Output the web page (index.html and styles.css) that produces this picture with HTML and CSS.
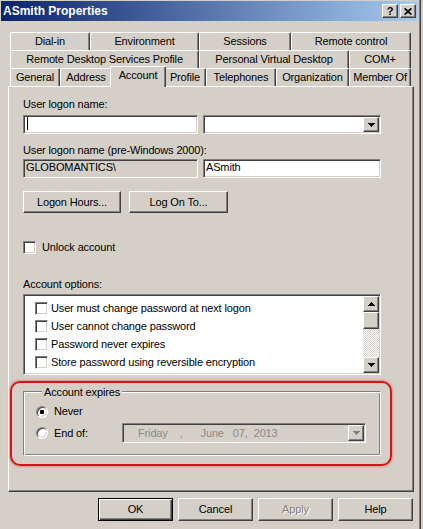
FILE: index.html
```html
<!DOCTYPE html>
<html lang="en">
<head>
  <meta charset="UTF-8" />
  <title>ASmith Properties</title>
  <link rel="stylesheet" href="styles.css">
</head>
<body>
  <div class="window">
    <div class="titlebar">
      <span class="title">ASmith Properties</span>
      <div class="caption-btns">
        <span class="cap-btn help">?</span>
        <span class="cap-btn">
          <svg width="8" height="7" viewBox="0 0 8 7"><path d="M0.6 0.4l6.8 6.2M7.4 0.4L0.6 6.6" stroke="#000" stroke-width="1.7"/></svg>
        </span>
      </div>
    </div>

    <div class="tabs">
      <div class="tab-row row1">
        <div class="tab">Dial-in</div>
        <div class="tab">Environment</div>
        <div class="tab">Sessions</div>
        <div class="tab">Remote control</div>
      </div>
      <div class="tab-row row2">
        <div class="tab">Remote Desktop Services Profile</div>
        <div class="tab">Personal Virtual Desktop</div>
        <div class="tab">COM+</div>
      </div>
      <div class="tab-row row3">
        <div class="tab">General</div>
        <div class="tab">Address</div>
        <div class="tab active">Account</div>
        <div class="tab">Profile</div>
        <div class="tab">Telephones</div>
        <div class="tab">Organization</div>
        <div class="tab">Member Of</div>
      </div>
    </div>

    <div class="panel">
      <div class="label first">User logon name:</div>
      <div class="field-row">
        <div class="edit"><span class="caret"></span></div>
        <div class="edit combo">
          <span class="drop-btn">
            <svg width="7" height="4" viewBox="0 0 7 4" shape-rendering="crispEdges"><path d="M0 0h7v1H6v1H5v1H4v1H3V3H2V2H1V1H0z"/></svg>
          </span>
        </div>
      </div>

      <div class="label second">User logon name (pre-Windows 2000):</div>
      <div class="field-row tight">
        <div class="edit readonly">GLOBOMANTICS\</div>
        <div class="edit">ASmith</div>
      </div>

      <div class="btn-row">
        <div class="btn logon-hours">Logon Hours...</div>
        <div class="btn log-on-to">Log On To...</div>
      </div>

      <div class="check unlock"><span class="box"></span>Unlock account</div>

      <div class="label options">Account options:</div>
      <div class="listbox">
        <div class="list-items">
          <div class="check item"><span class="box"></span>User must change password at next logon</div>
          <div class="check item"><span class="box"></span>User cannot change password</div>
          <div class="check item"><span class="box"></span>Password never expires</div>
          <div class="check item"><span class="box"></span>Store password using reversible encryption</div>
        </div>
        <div class="scrollbar">
          <span class="sb-btn">
            <svg width="7" height="4" viewBox="0 0 7 4" shape-rendering="crispEdges"><path d="M3 0h1v1h1v1h1v1h1v1H0V3h1V2h1V1h1z"/></svg>
          </span>
          <span class="sb-thumb"></span>
          <span class="sb-track"></span>
          <span class="sb-btn">
            <svg width="7" height="4" viewBox="0 0 7 4" shape-rendering="crispEdges"><path d="M0 0h7v1H6v1H5v1H4v1H3V3H2V2H1V1H0z"/></svg>
          </span>
        </div>
      </div>

      <div class="group">
        <div class="group-title">Account expires</div>
        <div class="radio-row never"><span class="radio checked"></span>Never</div>
        <div class="radio-row end-of">
          <span class="radio"></span>
          <span class="radio-label">End of:</span>
          <div class="datepicker">
            <span class="d-day">Friday</span>
            <span class="d-comma">,</span>
            <span class="d-month">June</span>
            <span class="d-date">07,</span>
            <span class="d-year">2013</span>
            <span class="drop-btn disabled">
              <svg width="7" height="4" viewBox="0 0 7 4" shape-rendering="crispEdges"><path d="M0 0h7v1H6v1H5v1H4v1H3V3H2V2H1V1H0z"/></svg>
            </span>
          </div>
        </div>
      </div>
    </div>

    <div class="footer">
      <div class="btn default">OK</div>
      <div class="btn">Cancel</div>
      <div class="btn disabled">Apply</div>
      <div class="btn">Help</div>
    </div>

    <div class="highlight"></div>
  </div>
</body>
</html>
```

FILE: styles.css
```css
* { box-sizing: border-box; }
body { margin: 0; background: #d4d0c8; font: 11px/13px "Liberation Sans", Arial, sans-serif; letter-spacing: -0.15px; color: #000; }

.window {
  position: relative; width: 421px; height: 529px; padding: 1px 2px 0 1px;
  background: #d4d0c8; border-right: 1px solid #404040; box-shadow: inset -1px 0 #808080;
}

/* title bar */
.titlebar {
  height: 20px; display: flex; align-items: center; justify-content: space-between;
  padding: 0 2px; background: linear-gradient(to right, #0a246a, #a6caf0);
}
.title { color: #fff; font-weight: bold; font-size: 12px; letter-spacing: 0; }
.caption-btns { display: flex; gap: 2px; }
.cap-btn {
  width: 16px; height: 14px; display: flex; align-items: center; justify-content: center;
  background: #d4d0c8; border: 1px solid; border-color: #fff #404040 #404040 #fff;
  box-shadow: inset -1px -1px #808080;
}
.cap-btn.help { font-weight: bold; font-size: 11px; line-height: 12px; letter-spacing: 0; }

/* tabs */
.tabs { margin: 11px 0 0 9px; width: 401px; }
.tab-row { display: grid; height: 18px; }
.row1 { grid-template-columns: 80px 109px 92px 120px; }
.row2 { grid-template-columns: 189px 150px 62px; }
.row3 { grid-template-columns: 50px 52px 52px 42px 70px 73px 62px; }
.tab {
  position: relative; z-index: 1; height: 18px; line-height: 17px; text-align: center; white-space: nowrap;
  background: #d4d0c8; border-top: 1px solid #fff; border-left: 1px solid #fff; border-right: 1px solid #404040;
  border-radius: 2px 2px 0 0; box-shadow: inset -1px 0 #808080;
}
.tab.active { z-index: 2; margin: -2px -2px 0; height: 21px; line-height: 17px; }

/* panel */
.panel {
  width: 406px; height: 406px; margin-left: 7px; padding: 11px 0 0 14px;
  border: 1px solid; border-color: #fff #404040 #404040 #fff; box-shadow: inset -1px -1px #808080;
}
.label.second { margin-top: 10px; }
.label.options { margin-top: 24px; }

.field-row { display: grid; grid-template-columns: 175px 178px; gap: 5px; margin-top: 4px; }
.field-row.tight { margin-top: 2px; }
.edit {
  height: 19px; padding: 1px 0 0 2px; background: #fff; white-space: nowrap;
  border: 1px solid; border-color: #808080 #fff #fff #808080;
  box-shadow: inset 1px 1px #404040, inset -1px -1px #d4d0c8;
}
.edit.readonly { background: #d4d0c8; }
.caret { display: block; width: 1px; height: 13px; margin-left: 1px; background: #000; }
.combo { display: flex; justify-content: flex-end; padding: 1px 1px 1px 0; }

.drop-btn {
  width: 16px; height: 15px; display: flex; align-items: center; justify-content: center;
  background: #d4d0c8; border: 1px solid; border-color: #fff #404040 #404040 #fff;
  box-shadow: inset -1px -1px #808080;
}
.drop-btn.disabled svg { fill: #808080; }

.btn-row { display: flex; gap: 8px; margin-top: 13px; }
.btn {
  width: 75px; height: 23px; display: flex; align-items: center; justify-content: center;
  background: #d4d0c8; border: 1px solid; border-color: #fff #404040 #404040 #fff;
  box-shadow: inset -1px -1px #808080;
}
.btn.logon-hours { width: 98px; height: 22px; }
.btn.log-on-to { width: 99px; height: 22px; }
.btn.default { border-color: #000; box-shadow: inset 1px 1px #fff, inset -1px -1px #404040, inset -2px -2px #808080; }
.btn.disabled { color: #808080; text-shadow: 1px 1px #fff; }

/* checkboxes */
.check { display: flex; align-items: center; gap: 6px; }
.box {
  width: 13px; height: 13px; flex: none; background: #fff;
  border: 1px solid; border-color: #808080 #fff #fff #808080;
  box-shadow: inset 1px 1px #404040, inset -1px -1px #d4d0c8;
}
.check.unlock { margin-top: 28px; }

.listbox {
  width: 358px; height: 81px; margin-top: 3px; display: flex; background: #fff;
  border: 1px solid; border-color: #808080 #fff #fff #808080;
  box-shadow: inset 1px 1px #404040, inset -1px -1px #d4d0c8; padding: 1px;
}
.list-items { flex: 1; padding: 3px 0 0 10px; }
.check.item { height: 18px; gap: 3px; }
.scrollbar { width: 16px; display: flex; flex-direction: column; }
.sb-btn, .sb-thumb {
  height: 16px; display: flex; align-items: center; justify-content: center; flex: none;
  background: #d4d0c8; border: 1px solid; border-color: #fff #404040 #404040 #fff;
  box-shadow: inset -1px -1px #808080;
}
.sb-thumb { height: 17px; }
.sb-track { flex: 1; background: repeating-conic-gradient(#fff 0 25%, #d4d0c8 0 50%) 0 0 / 2px 2px; }

/* group box */
.group {
  width: 358px; margin-top: 16px; padding: 0 0 12px 12px;
  border: 1px solid; border-color: #808080 #fff #fff #808080;
  box-shadow: inset 1px 1px #fff, inset -1px -1px #808080;
}
.group-title { display: block; width: fit-content; margin: -6px 0 0 6px; padding: 0 2px; background: #d4d0c8; }
.radio-row { display: flex; align-items: center; gap: 6px; }
.radio-row.never { margin-top: 6px; }
.radio-row.end-of { margin-top: 5px; height: 20px; }
.radio {
  width: 12px; height: 12px; flex: none; border-radius: 50%; background: #fff;
  border: 1px solid; border-color: #808080 #fff #fff #808080;
  box-shadow: inset 1px 1px #404040, inset -1px -1px #d4d0c8;
}
.radio.checked { background: radial-gradient(circle, #000 0 2px, #fff 2.5px); }
.radio-label { width: 62px; }
.datepicker {
  width: 244px; height: 20px; display: flex; align-items: center; padding: 0 1px 0 15px;
  background: #d4d0c8; color: #8a8a8a;
  border: 1px solid; border-color: #808080 #fff #fff #808080;
  box-shadow: inset 1px 1px #404040, inset -1px -1px #d4d0c8;
}
.d-comma { margin-left: 12px; }
.d-month { margin-left: 18px; }
.d-date { margin-left: 9px; }
.d-year { margin-left: 6px; }
.datepicker .drop-btn { margin-left: auto; height: 16px; }

/* footer */
.footer { display: flex; justify-content: flex-end; gap: 5px; margin-top: 6px; padding-right: 5px; }

/* annotation */
.highlight {
  position: absolute; left: 10px; top: 381px; width: 382px; height: 85px;
  border: 2px solid #d01818; border-radius: 10px; box-shadow: 0 0 2px 1px rgba(230, 90, 90, 0.5);
}
```
